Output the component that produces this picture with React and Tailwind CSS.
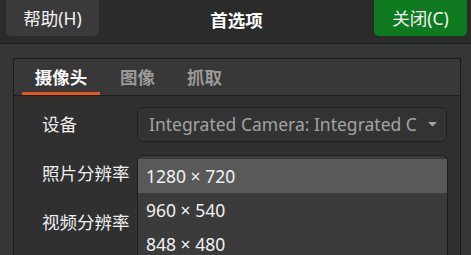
import React from "react";

const font = { fontFamily: '"Noto Sans", "Noto Sans CJK SC", sans-serif' };

function HeaderButton({ children, green }) {
  return (
    <div
      className={`-mt-[4px] h-[40px] w-[93px] rounded-[5px] flex items-center justify-center pt-[4px] text-[17.5px] text-[#f2f2f2] ${
        green ? "bg-[#0e7a1f]" : "bg-[#3a3a3a]"
      }`}
    >
      {children}
    </div>
  );
}

function Row({ label, children }) {
  return (
    <div className="flex items-center h-[35px]">
      <div className="w-[95px] text-[17.5px] text-[#eeeeee]">{label}</div>
      {children}
    </div>
  );
}

export default function App() {
  return (
    <div style={font} className="w-[471px] h-[255px] overflow-hidden bg-[#353535] relative">
      {/* header bar */}
      <div className="h-[44px] bg-[#2b2b2b] border-b border-[#1c1c1c] flex items-start justify-between pl-[6px] pr-[4px]">
        <HeaderButton>帮助(H)</HeaderButton>
        <div className="h-[40px] flex items-center text-[17.5px] font-bold text-white">首选项</div>
        <HeaderButton green>关闭(C)</HeaderButton>
      </div>

      {/* notebook */}
      <div className="ml-[13px] mt-[14px] w-[448px] h-[240px] border border-[#1b1b1b] bg-[#303030]">
        <div className="h-[37px] bg-[#383838] border-b border-[#1e1e1e] flex items-stretch text-[17.5px]">
          <div className="ml-[8px] w-[78px] flex items-center justify-center font-bold text-[#f5f5f5] border-b-[3px] border-[#e95420] pt-[3px]">
            摄像头
          </div>
          <div className="ml-[20px] flex items-center font-bold text-[#9a9a9a]">图像</div>
          <div className="ml-[32px] flex items-center font-bold text-[#9a9a9a]">抓取</div>
        </div>

        <div className="pl-[28px] pt-[11px] flex flex-col gap-[14px]">
          <Row label="设备">
            <div className="w-[310px] h-[35px] rounded-[5px] border border-[#202020] bg-[#333333] flex items-center pl-[11px] pr-[9px] text-[17.5px] text-[#a3a3a3]">
              <span className="flex-1 whitespace-nowrap overflow-hidden">Integrated Camera: Integrated C</span>
              <svg width="9" height="5" viewBox="0 0 9 5" className="ml-[4px]">
                <path d="M0 0 L9 0 L4.5 4.5 Z" fill="#a3a3a3" />
              </svg>
            </div>
          </Row>
          <Row label="照片分辨率">
            <div className="w-[310px] h-[35px]" />
          </Row>
          <Row label="视频分辨率">
            <div className="w-[310px] h-[35px]" />
          </Row>
        </div>
      </div>

      {/* open resolution popup */}
      <div className="absolute left-[137px] top-[155px] w-[311px] h-[110px] rounded-t-[6px] border border-[#1c1c1c] bg-[#3b3b3b] pt-[3px] text-[17.5px] text-[#f2f2f2]">
        <div className="h-[34px] bg-[#595959] flex items-center pl-[8px]">1280 × 720</div>
        <div className="h-[34px] flex items-center pl-[8px]">960 × 540</div>
        <div className="h-[34px] flex items-center pl-[8px]">848 × 480</div>
      </div>
    </div>
  );
}
